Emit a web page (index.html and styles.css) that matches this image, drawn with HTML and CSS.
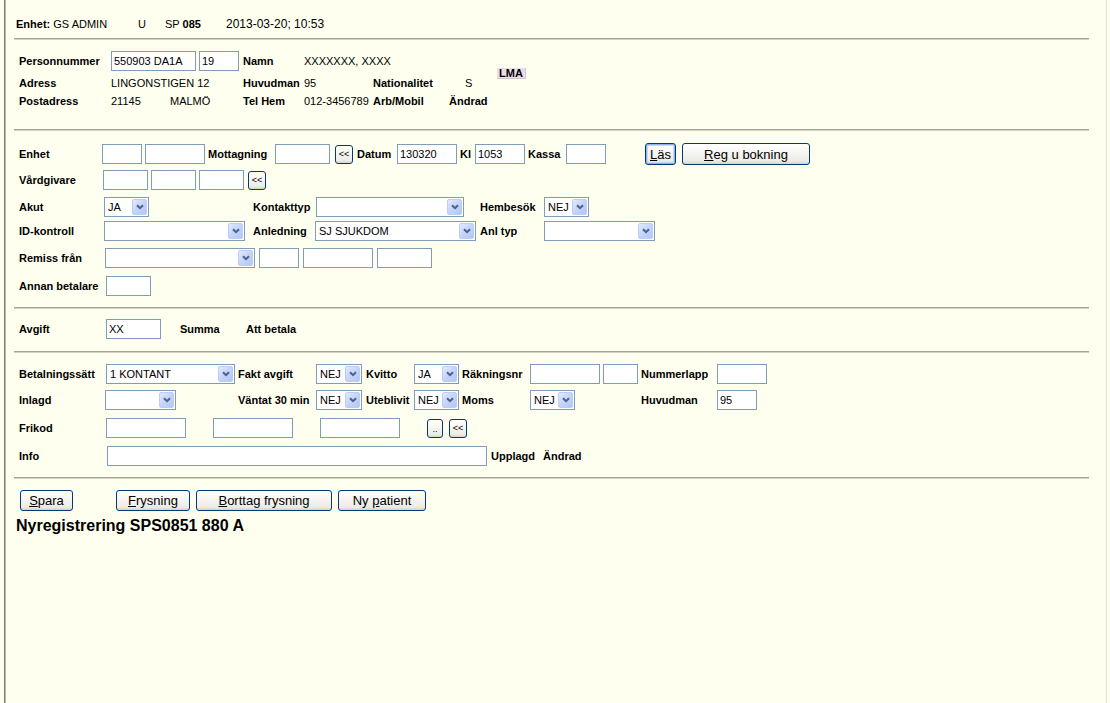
FILE: index.html
```html
<!DOCTYPE html>
<html lang="sv">
<head>
<meta charset="utf-8">
<title>Nyregistrering</title>
<link rel="stylesheet" href="styles.css">
</head>
<body>
<div class="frame">
  <div class="topbar">
    <span class="tb-unit"><b>Enhet:</b> GS ADMIN</span>
    <span class="tb-u">U</span>
    <span class="tb-sp">SP <b>085</b></span>
    <span class="tb-date">2013-03-20; 10:53</span>
  </div>
  <hr class="rule">

  <div class="patient">
    <b>Personnummer</b>
    <span class="pair"><input class="inp w85" value="550903 DA1A"><input class="inp w40" value="19"></span>
    <b>Namn</b>
    <span class="span3">XXXXXXX, XXXX</span>
    <span class="lma">LMA</span>

    <b>Adress</b>
    <span>LINGONSTIGEN 12</span>
    <b>Huvudman</b>
    <span>95</span>
    <b>Nationalitet</b>
    <span class="nat">S</span>

    <b>Postadress</b>
    <span><span class="zip">21145</span>MALMÖ</span>
    <b>Tel Hem</b>
    <span>012-3456789</span>
    <b>Arb/Mobil</b>
    <b>Ändrad</b>
  </div>
  <hr class="rule">

  <div class="visit">
    <div class="row r-enhet">
      <b>Enhet</b>
      <input class="inp w40">
      <input class="inp w60">
      <b>Mottagning</b>
      <input class="inp w55">
      <button class="btn mini">&lt;&lt;</button>
      <b>Datum</b>
      <input class="inp w60" value="130320">
      <b>Kl</b>
      <input class="inp w50" value="1053">
      <b>Kassa</b>
      <input class="inp w40">
      <button class="btn tall focus b-las"><span><u>L</u>äs</span></button>
      <button class="btn tall b-reg"><span><u>R</u>eg u bokning</span></button>
    </div>

    <div class="row r-vard">
      <b>Vårdgivare</b>
      <input class="inp w45">
      <input class="inp w45">
      <input class="inp w45">
      <button class="btn mini">&lt;&lt;</button>
    </div>

    <div class="row r-akut">
      <b>Akut</b>
      <span class="sel w45"><span class="sel-v">JA</span><span class="sel-btn"><svg width="8" height="6" viewBox="0 0 8 6"><path d="M1 1.2 4 4.2 7 1.2" fill="none" stroke="#4d6185" stroke-width="2"/></svg></span></span>
      <b>Kontakttyp</b>
      <span class="sel w148 nudge"><span class="sel-v"></span><span class="sel-btn"><svg width="8" height="6" viewBox="0 0 8 6"><path d="M1 1.2 4 4.2 7 1.2" fill="none" stroke="#4d6185" stroke-width="2"/></svg></span></span>
      <b>Hembesök</b>
      <span class="sel w45"><span class="sel-v">NEJ</span><span class="sel-btn"><svg width="8" height="6" viewBox="0 0 8 6"><path d="M1 1.2 4 4.2 7 1.2" fill="none" stroke="#4d6185" stroke-width="2"/></svg></span></span>

      <b>ID-kontroll</b>
      <span class="sel w141"><span class="sel-v"></span><span class="sel-btn"><svg width="8" height="6" viewBox="0 0 8 6"><path d="M1 1.2 4 4.2 7 1.2" fill="none" stroke="#4d6185" stroke-width="2"/></svg></span></span>
      <b>Anledning</b>
      <span class="sel w161"><span class="sel-v">SJ SJUKDOM</span><span class="sel-btn"><svg width="8" height="6" viewBox="0 0 8 6"><path d="M1 1.2 4 4.2 7 1.2" fill="none" stroke="#4d6185" stroke-width="2"/></svg></span></span>
      <b>Anl typ</b>
      <span class="sel w111"><span class="sel-v"></span><span class="sel-btn"><svg width="8" height="6" viewBox="0 0 8 6"><path d="M1 1.2 4 4.2 7 1.2" fill="none" stroke="#4d6185" stroke-width="2"/></svg></span></span>
    </div>

    <div class="row r-remiss">
      <b>Remiss från</b>
      <span class="sel w150"><span class="sel-v"></span><span class="sel-btn"><svg width="8" height="6" viewBox="0 0 8 6"><path d="M1 1.2 4 4.2 7 1.2" fill="none" stroke="#4d6185" stroke-width="2"/></svg></span></span>
      <input class="inp w40">
      <input class="inp w70">
      <input class="inp w55">
    </div>

    <div class="row r-annan">
      <b>Annan betalare</b>
      <input class="inp w45">
    </div>
  </div>
  <hr class="rule">

  <div class="fee">
    <div class="row r-fee">
      <b>Avgift</b>
      <input class="inp w55" value="XX">
      <b>Summa</b>
      <b>Att betala</b>
    </div>
  </div>
  <hr class="rule">

  <div class="pay">
    <div class="row r-pay">
      <b>Betalningssätt</b>
      <span class="sel w129"><span class="sel-v">1 KONTANT</span><span class="sel-btn"><svg width="8" height="6" viewBox="0 0 8 6"><path d="M1 1.2 4 4.2 7 1.2" fill="none" stroke="#4d6185" stroke-width="2"/></svg></span></span>
      <b>Fakt avgift</b>
      <span class="sel w46"><span class="sel-v">NEJ</span><span class="sel-btn"><svg width="8" height="6" viewBox="0 0 8 6"><path d="M1 1.2 4 4.2 7 1.2" fill="none" stroke="#4d6185" stroke-width="2"/></svg></span></span>
      <b>Kvitto</b>
      <span class="sel w45"><span class="sel-v">JA</span><span class="sel-btn"><svg width="8" height="6" viewBox="0 0 8 6"><path d="M1 1.2 4 4.2 7 1.2" fill="none" stroke="#4d6185" stroke-width="2"/></svg></span></span>
      <b>Räkningsnr</b>
      <span class="pair"><input class="inp w70"><input class="inp w35"></span>
      <b>Nummerlapp</b>
      <input class="inp w50">

      <b>Inlagd</b>
      <span class="sel w71 pull"><span class="sel-v"></span><span class="sel-btn"><svg width="8" height="6" viewBox="0 0 8 6"><path d="M1 1.2 4 4.2 7 1.2" fill="none" stroke="#4d6185" stroke-width="2"/></svg></span></span>
      <b>Väntat 30 min</b>
      <span class="sel w46"><span class="sel-v">NEJ</span><span class="sel-btn"><svg width="8" height="6" viewBox="0 0 8 6"><path d="M1 1.2 4 4.2 7 1.2" fill="none" stroke="#4d6185" stroke-width="2"/></svg></span></span>
      <b>Uteblivit</b>
      <span class="sel w45"><span class="sel-v">NEJ</span><span class="sel-btn"><svg width="8" height="6" viewBox="0 0 8 6"><path d="M1 1.2 4 4.2 7 1.2" fill="none" stroke="#4d6185" stroke-width="2"/></svg></span></span>
      <b>Moms</b>
      <span class="sel w45"><span class="sel-v">NEJ</span><span class="sel-btn"><svg width="8" height="6" viewBox="0 0 8 6"><path d="M1 1.2 4 4.2 7 1.2" fill="none" stroke="#4d6185" stroke-width="2"/></svg></span></span>
      <b>Huvudman</b>
      <input class="inp w40" value="95">
    </div>

    <div class="row r-frikod">
      <b>Frikod</b>
      <input class="inp w80">
      <input class="inp w80">
      <input class="inp w80">
      <button class="btn mini dots">..</button>
      <button class="btn mini">&lt;&lt;</button>
    </div>

    <div class="row r-info">
      <b>Info</b>
      <input class="inp w380">
      <b>Upplagd</b>
      <b>Ändrad</b>
    </div>
  </div>
  <hr class="rule">

  <div class="actions">
    <button class="btn b-spara"><span><u>S</u>para</span></button>
    <button class="btn b-frys"><span><u>F</u>rysning</span></button>
    <button class="btn b-bort"><span><u>B</u>orttag frysning</span></button>
    <button class="btn b-ny"><span>Ny <u>p</u>atient</span></button>
  </div>
  <div class="status">Nyregistrering SPS0851 880 A</div>
</div>
</body>
</html>
```

FILE: styles.css
```css
* { box-sizing: border-box; }

html, body {
  margin: 0;
  padding: 0;
}

body {
  background: #fffff0;
  font-family: "Liberation Sans", Arial, sans-serif;
  font-size: 11px;
  color: #000;
}

.frame {
  margin-left: 4px;
  width: 1103px;
  height: 703px;
  border-left: 1px solid #7f7e72;
  border-right: 1px solid #e3e2d8;
  box-shadow: inset 1px 0 0 #b9b8ac;
  overflow: hidden;
}

b { font-weight: bold; white-space: nowrap; }

/* ---------- top bar ---------- */
.topbar {
  display: flex;
  align-items: baseline;
  height: 38px;
  padding: 17px 0 0 11px;
  font-size: 11px;
  line-height: 14px;
  white-space: nowrap;
}
.tb-unit { width: 122px; }
.tb-u { width: 27px; }
.tb-sp { width: 61px; }
.tb-date { font-size: 12px; }

/* ---------- rules ---------- */
.rule {
  display: block;
  margin: 0 0 0 9px;
  width: 1075px;
  height: 2px;
  border: 0;
  border-top: 1px solid #a6a59a;
  border-bottom: 1px solid #d3d2c6;
}

/* ---------- patient block ---------- */
.patient {
  display: grid;
  grid-template-columns: 92px 132px 61px 69px 76px 48px auto;
  grid-template-rows: 20px 24px 12px;
  align-items: center;
  justify-items: start;
  padding: 11px 0 22px 14px;
  line-height: 12px;
  white-space: nowrap;
}
.pair { display: flex; gap: 3px; }
.span3 { grid-column: span 3; }
.nat { padding-left: 16px; }
.zip { display: inline-block; width: 59px; }
.lma {
  grid-row: span 2;
  align-self: center;
  padding: 0 2px;
  height: 11px;
  line-height: 11px;
  font-weight: bold;
  background: #ebdde6;
  border-right: 1px solid #d6c8d1;
  border-bottom: 1px solid #d6c8d1;
}

/* ---------- generic rows ---------- */
.row {
  display: grid;
  align-items: center;
  justify-items: start;
  height: 20px;
  line-height: 12px;
  white-space: nowrap;
}

.visit { padding: 12px 0 11px 14px; }
.fee { padding: 10px 0 12px 14px; }
.pay { padding: 11px 0 11px 14px; }

.r-enhet { grid-template-columns: 83px 43px 63px 67px 60px 22px 40px 63px 15px 53px 38px 79px 37px 128px; }
.r-vard { margin-top: 7px; grid-template-columns: 84px 48px 48px 49px 18px; }
.r-akut {
  margin-top: 7px;
  height: auto;
  grid-template-columns: 85px 149px 62px 165px 64px auto;
  grid-template-rows: 20px 20px;
  row-gap: 4px;
}
.r-remiss { margin-top: 7px; grid-template-columns: 86px 154px 44px 74px 55px; }
.r-annan { margin-top: 8px; grid-template-columns: 87px 45px; }
.r-fee { grid-template-columns: 87px 74px 66px auto; }
.r-pay {
  height: auto;
  grid-template-columns: 87px 132px 78px 50px 48px 48px 68px 111px 76px auto;
  grid-template-rows: 20px 20px;
  row-gap: 6px;
}
.r-frikod { margin-top: 8px; grid-template-columns: 87px 107px 107px 107px 22px 18px; }
.r-info { margin-top: 8px; grid-template-columns: 88px 384px 52px auto; }

.nudge { margin-left: 1px; }
.pull { margin-left: -1px; }

/* ---------- text inputs ---------- */
.inp {
  display: block;
  height: 20px;
  margin: 0;
  padding: 0 2px;
  border: 1px solid #7f9db9;
  background: #fff;
  font: 11px "Liberation Sans", Arial, sans-serif;
  color: #000;
  outline: none;
}

.w35 { width: 35px; }
.w40 { width: 40px; }
.w45 { width: 45px; }
.w46 { width: 46px; }
.w50 { width: 50px; }
.w55 { width: 55px; }
.w60 { width: 60px; }
.w70 { width: 70px; }
.w71 { width: 71px; }
.w80 { width: 80px; }
.w85 { width: 85px; }
.w111 { width: 111px; }
.w129 { width: 129px; }
.w141 { width: 141px; }
.w148 { width: 148px; }
.w150 { width: 150px; }
.w161 { width: 161px; }
.w380 { width: 380px; }

/* ---------- combo boxes ---------- */
.sel {
  display: flex;
  align-items: center;
  height: 20px;
  padding: 0 1px 0 3px;
  border: 1px solid #7f9db9;
  background: #fff;
}
.sel-v {
  flex: 1;
  min-width: 0;
  overflow: hidden;
  white-space: nowrap;
  font-size: 11px;
  line-height: 12px;
}
.sel-btn {
  display: flex;
  align-items: center;
  justify-content: center;
  width: 15px;
  height: 16px;
  border: 1px solid #bccdf5;
  border-radius: 2px;
  background: linear-gradient(135deg, #e2eafe 0%, #c6d6fc 45%, #b2c6f6 100%);
}
.sel-btn svg { display: block; }

/* ---------- buttons ---------- */
.btn {
  display: flex;
  align-items: center;
  justify-content: center;
  height: 21px;
  margin: 0;
  padding: 0;
  border: 1px solid #003c74;
  border-radius: 3px;
  background: linear-gradient(#ffffff 0%, #f6f5f1 45%, #ecebe6 85%, #d8d2c7 100%);
  font: 13px "Liberation Sans", Arial, sans-serif;
  color: #000;
  white-space: nowrap;
}
.btn span { white-space: pre; }
.btn u { text-decoration: underline; text-underline-offset: 1px; }
.btn.tall { height: 22px; }
.btn.focus {
  box-shadow: inset 0 0 0 1px #8fb0ec, inset 0 0 0 2px #c9d9f9;
}
.btn.mini {
  width: 18px;
  height: 19px;
  font-size: 9px;
  letter-spacing: 0;
}
.btn.dots {
  width: 16px;
  align-items: flex-end;
  padding-bottom: 3px;
  line-height: 9px;
}

.b-las { width: 31px; }
.b-reg { width: 128px; }

.actions {
  display: flex;
  gap: 6px;
  padding: 11px 0 0 15px;
}
.b-spara { width: 53px; margin-right: 37px; }
.b-frys { width: 74px; }
.b-bort { width: 136px; }
.b-ny { width: 88px; }

.status {
  margin: 6px 0 0 11px;
  font-size: 16px;
  font-weight: bold;
  line-height: 18px;
  white-space: nowrap;
}
```
